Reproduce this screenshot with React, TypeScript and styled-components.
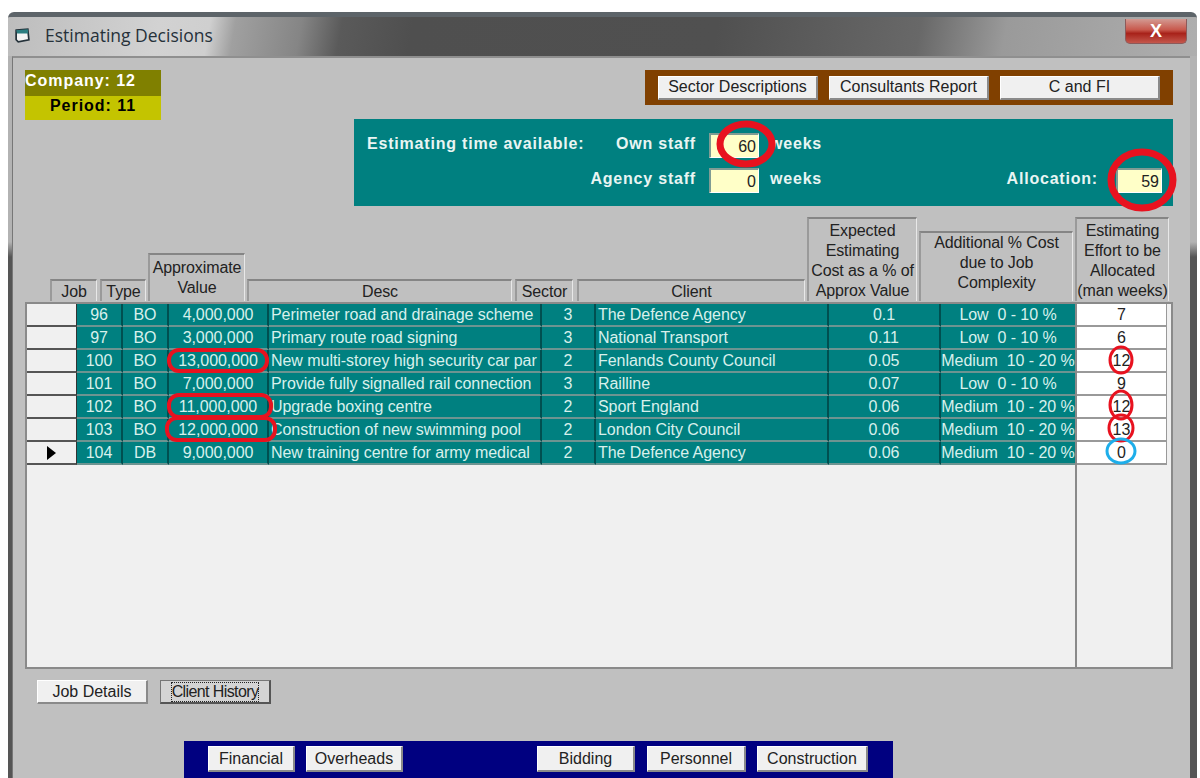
import React from "react";
import styled, { createGlobalStyle } from "styled-components";

const Global = createGlobalStyle`
  html, body { margin: 0; padding: 0; background: #fff; }
  body { font-family: "Liberation Sans", Arial, sans-serif; color: #111; }
`;

const Page = styled.div`
  position: relative;
  width: 1200px;
  height: 778px;
  overflow: hidden;
  background: #fff;
  box-sizing: border-box;
  padding: 12px 3px 0 8px;
`;

const Win = styled.div`
  height: 766px;
  display: flex;
  flex-direction: column;
  border-radius: 6px 6px 0 0;
  overflow: hidden;
  background: linear-gradient(180deg, #b3b3b3 0, #b3b3b3 225px, #555 240px, #555 100%);
  border-top: 5px solid #5d6469;
`;

const TitleBar = styled.div`
  height: 39px;
  box-sizing: border-box;
  flex: none;
  display: flex;
  align-items: center;
  gap: 14px;
  padding: 0 10px 3px 6px;
  background: linear-gradient(
    100deg,
    #bdbdbd 0,
    #d2d2d2 150px,
    #cfcfcf 200px,
    #a0a0a0 225px,
    #858585 290px,
    #5a5a5a 330px,
    #4f4f4f 400px,
    #505050 700px,
    #686868 900px,
    #9a9a9a 985px,
    #b0b0b0 1190px
  );
`;

const AppIcon = styled.svg`
  width: 17px;
  height: 17px;
  flex: none;
`;

const TitleText = styled.span`
  font-family: "Open Sans", "Liberation Sans", sans-serif;
  font-size: 17.5px;
  color: #26313a;
  flex: 1;
`;

const CloseButton = styled.div`
  width: 62px;
  height: 25px;
  margin-top: -7px;
  border: 1px solid #8c5a5a;
  border-top: none;
  border-radius: 0 0 5px 5px;
  box-sizing: border-box;
  background: linear-gradient(180deg, #d39a92 0, #c8584c 45%, #a8221a 60%, #c4574c 100%);
  color: #fff;
  font: bold 18px "Liberation Sans", sans-serif;
  display: flex;
  align-items: center;
  justify-content: center;
`;

const Client = styled.div`
  flex: 1;
  margin: 0 7px 0 4px;
  padding: 12px 17px 0 12px;
  background: #c0c0c0;
  border-top: 2px solid #8f8f8f;
  border-left: 1px solid #777;
`;

const TopArea = styled.div`
  display: flex;
  justify-content: space-between;
  align-items: flex-start;
`;

const StatusBox = styled.div`
  width: 136px;
  font-weight: bold;
  font-size: 16px;
  letter-spacing: 0.95px;
`;

const CompanyLine = styled.div`
  height: 26px;
  line-height: 21px;
  background: #808000;
  color: #fff;
`;

const PeriodLine = styled.div`
  height: 24px;
  line-height: 20px;
  padding-left: 25px;
  background: #c4c400;
  color: #000;
`;

const RightColumn = styled.div`
  width: 819px;
  display: flex;
  flex-direction: column;
  align-items: flex-end;
  gap: 14px;
`;

const ReportBar = styled.div`
  width: 528px;
  height: 35px;
  box-sizing: border-box;
  background: #804000;
  display: flex;
  align-items: center;
  gap: 11px;
  padding-left: 13px;
`;

const Btn = styled.div<{ $w: number; $h?: number; $focused?: boolean }>`
  width: ${(p) => p.$w}px;
  height: ${(p) => p.$h ?? 24}px;
  flex: none;
  box-sizing: border-box;
  background: ${(p) => (p.$focused ? "#d4d4d4" : "#f0f0f0")};
  border-style: solid;
  border-width: 1px 2px 2px 1px;
  border-color: ${(p) => (p.$focused ? "#777 #555 #555 #777" : "#fff #8a8a8a #8a8a8a #fff")};
  font-size: 16px;
  white-space: nowrap;
  display: flex;
  align-items: center;
  justify-content: center;
  color: #222;
`;

const FocusLabel = styled.span`
  outline: 1px dotted #222;
  outline-offset: 0;
  letter-spacing: -0.6px;
`;

const TimePanel = styled.div`
  width: 819px;
  height: 87px;
  background: #008080;
  color: #e9f5f3;
  font-weight: bold;
  font-size: 16px;
  letter-spacing: 0.8px;
  display: grid;
  grid-template-columns: 234px 108px 50px 66px 1fr 46px;
  grid-template-rows: 25px 25px;
  row-gap: 10px;
  align-items: center;
  padding: 14px 11px 0 13px;
  box-sizing: border-box;
`;

const PanelText = styled.span`
  padding-bottom: 4px;
  white-space: nowrap;
`;

const RightLabel = styled(PanelText)<{ $pad?: number; $wide?: boolean }>`
  text-align: right;
  padding-right: ${(p) => p.$pad ?? 13}px;
  ${(p) => p.$wide && "grid-column: 1 / 3;"}
`;

const Unit = styled(PanelText)`
  padding-left: 11px;
`;

const NumField = styled.div`
  height: 25px;
  box-sizing: border-box;
  background: #ffffc8;
  border-style: solid;
  border-width: 2px 1px 1px 2px;
  border-color: #7f9c94 #fff #fff #7f9c94;
  color: #222;
  font-weight: normal;
  letter-spacing: 0;
  text-align: right;
  line-height: 23px;
  padding-right: 2px;
`;

const HeaderRow = styled.div`
  display: flex;
  align-items: flex-end;
  gap: 2px;
  margin: 11px 0 1px 25px;
  height: 84px;
`;

const HeadCell = styled.div<{ $w: number; $h: number; $gap?: number; $pad: number }>`
  width: ${(p) => p.$w}px;
  height: ${(p) => p.$h}px;
  margin-left: ${(p) => p.$gap ?? 0}px;
  flex: none;
  box-sizing: border-box;
  padding-top: ${(p) => p.$pad}px;
  border-style: solid;
  border-width: 2px 1px 0 2px;
  border-color: #858585 #e8e8e8 #858585 #9a9a9a;
  font-size: 16px;
  line-height: 20px;
  letter-spacing: -0.1px;
  text-align: center;
  color: #222;
  white-space: pre-line;
  overflow: hidden;
`;

const Frame = styled.div`
  width: 1148px;
  height: 367px;
  box-sizing: border-box;
  background: #f0f0f0;
  border: 2px solid #8a8a8a;
  display: flex;
`;

const RowsColumn = styled.div`
  width: 1048px;
  flex: none;
`;

const Row = styled.div`
  height: 23px;
  box-sizing: border-box;
  display: grid;
  grid-template-columns: 50px 46px 46px 100px 273px 54px 233px 112px 134px;
`;

const Indicator = styled.div`
  background: #f0f0f0;
  border-right: 1px solid #333;
  border-bottom: 2px solid #555;
  display: flex;
  align-items: center;
  justify-content: center;
`;

const RowArrow = styled.span`
  width: 0;
  height: 0;
  border-style: solid;
  border-width: 7px 0 7px 9px;
  border-color: transparent transparent transparent #000;
`;

const DataCell = styled.div<{ $left?: boolean }>`
  background: #008080;
  border-right: 2px solid #004f50;
  border-bottom: 2px solid #6d9491;
  box-sizing: border-box;
  color: #d8f0ec;
  font-size: 16px;
  line-height: 21px;
  letter-spacing: -0.05px;
  text-align: ${(p) => (p.$left ? "left" : "center")};
  padding-left: ${(p) => (p.$left ? "2px" : 0)};
  white-space: pre;
  overflow: hidden;
  &:last-child { border-right: none; }
`;

const EffortColumn = styled.div`
  width: 92px;
  flex: none;
  border-left: 2px solid #8a8a8a;
`;

const EffortCell = styled.div`
  height: 23px;
  width: 90px;
  box-sizing: border-box;
  background: #fff;
  border-right: 1px solid #999;
  border-bottom: 2px solid #999;
  font-size: 16px;
  line-height: 21px;
  text-align: center;
  color: #222;
`;

const DetailButtons = styled.div`
  display: flex;
  gap: 12px;
  margin: 11px 0 0 12px;
`;

const NavBar = styled.div`
  width: 709px;
  height: 37px;
  margin: 37px 0 0 159px;
  box-sizing: border-box;
  background: #000080;
  display: flex;
  align-items: flex-start;
  padding: 5px 0 0 24px;
`;

const NavSpacer = styled.div<{ $w: number }>`
  width: ${(p) => p.$w}px;
  flex: none;
`;

const Notes = styled.svg`
  position: absolute;
  left: 0;
  top: 0;
  width: 1200px;
  height: 778px;
  pointer-events: none;
`;

type Job = [string, string, string, string, string, string, string, string, string];

const jobs: Job[] = [
  ["96", "BO", "4,000,000", "Perimeter road and drainage scheme", "3", "The Defence Agency", "0.1", "Low  0 - 10 %", "7"],
  ["97", "BO", "3,000,000", "Primary route road signing", "3", "National Transport", "0.11", "Low  0 - 10 %", "6"],
  ["100", "BO", "13,000,000", "New multi-storey high security car par", "2", "Fenlands County Council", "0.05", "Medium  10 - 20 %", "12"],
  ["101", "BO", "7,000,000", "Provide fully signalled rail connection", "3", "Railline", "0.07", "Low  0 - 10 %", "9"],
  ["102", "BO", "11,000,000", "Upgrade boxing centre", "2", "Sport England", "0.06", "Medium  10 - 20 %", "12"],
  ["103", "BO", "12,000,000", "Construction of new swimming pool", "2", "London City Council", "0.06", "Medium  10 - 20 %", "13"],
  ["104", "DB", "9,000,000", "New training centre for army medical", "2", "The Defence Agency", "0.06", "Medium  10 - 20 %", "0"],
];

const headers = [
  { label: "Job", w: 47, h: 22, pad: 1 },
  { label: "Type", w: 46, h: 22, gap: 1, pad: 1 },
  { label: "Approximate\nValue", w: 97, h: 48, pad: 3 },
  { label: "Desc", w: 265, h: 22, pad: 1 },
  { label: "Sector", w: 58, h: 22, gap: 1, pad: 1 },
  { label: "Client", w: 228, h: 22, gap: 2, pad: 1 },
  { label: "Expected\nEstimating\nCost as a % of\nApprox Value", w: 110, h: 84, pad: 2 },
  { label: "Additional % Cost\ndue to Job\nComplexity", w: 154, h: 70, pad: 0 },
  { label: "Estimating\nEffort to be\nAllocated\n(man weeks)", w: 94, h: 84, pad: 2 },
];

export default function App() {
  return (
    <Page>
      <Global />
      <Win>
        <TitleBar>
          <AppIcon viewBox="0 0 16 16">
            <path d="M2 3 L13 2 L14 12 L4 14 L2 12 Z" fill="#f4f4f4" stroke="#25323a" strokeWidth="1.6" />
            <path d="M2 3 L13 2 L13.4 6 L3 6 Z" fill="#2b7d80" />
          </AppIcon>
          <TitleText>Estimating Decisions</TitleText>
          <CloseButton>X</CloseButton>
        </TitleBar>
        <Client>
          <TopArea>
            <StatusBox>
              <CompanyLine>Company: 12</CompanyLine>
              <PeriodLine>Period: 11</PeriodLine>
            </StatusBox>
            <RightColumn>
              <ReportBar>
                <Btn $w={160}>Sector Descriptions</Btn>
                <Btn $w={160}>Consultants Report</Btn>
                <Btn $w={160}>C and FI</Btn>
              </ReportBar>
              <TimePanel>
                <PanelText>Estimating time available:</PanelText>
                <RightLabel>Own staff</RightLabel>
                <NumField>60</NumField>
                <Unit>weeks</Unit>
                <span />
                <span />
                <RightLabel $wide>Agency staff</RightLabel>
                <NumField>0</NumField>
                <Unit>weeks</Unit>
                <RightLabel $pad={18}>Allocation:</RightLabel>
                <NumField>59</NumField>
              </TimePanel>
            </RightColumn>
          </TopArea>
          <HeaderRow>
            {headers.map((h) => (
              <HeadCell key={h.label} $w={h.w} $h={h.h} $gap={h.gap} $pad={h.pad}>{h.label}</HeadCell>
            ))}
          </HeaderRow>
          <Frame>
            <RowsColumn>
              {jobs.map((job, i) => (
                <Row key={job[0]}>
                  <Indicator>{i === jobs.length - 1 && <RowArrow />}</Indicator>
                  {job.slice(0, 8).map((v, c) => (
                    <DataCell key={c} $left={c === 3 || c === 5}>{v}</DataCell>
                  ))}
                </Row>
              ))}
            </RowsColumn>
            <EffortColumn>
              {jobs.map((job) => (
                <EffortCell key={job[0]}>{job[8]}</EffortCell>
              ))}
            </EffortColumn>
          </Frame>
          <DetailButtons>
            <Btn $w={111}>Job Details</Btn>
            <Btn $w={111} $focused>
              <FocusLabel>Client History</FocusLabel>
            </Btn>
          </DetailButtons>
          <NavBar>
            <Btn $w={87} $h={26}>Financial</Btn>
            <NavSpacer $w={11} />
            <Btn $w={97} $h={26}>Overheads</Btn>
            <NavSpacer $w={134} />
            <Btn $w={98} $h={26}>Bidding</Btn>
            <NavSpacer $w={12} />
            <Btn $w={99} $h={26}>Personnel</Btn>
            <NavSpacer $w={11} />
            <Btn $w={111} $h={26}>Construction</Btn>
          </NavBar>
        </Client>
      </Win>
      {/* Hand-drawn markers placed over figures on the form */}
      <Notes viewBox="0 0 1200 778" fill="none">
        <g stroke="#e8121f">
          <ellipse cx="746" cy="144" rx="26" ry="20" strokeWidth="7" />
          <ellipse cx="1142" cy="180" rx="31" ry="28" strokeWidth="7" />
          <rect x="169" y="350" width="98" height="21" rx="10" strokeWidth="4" />
          <rect x="169" y="395" width="102" height="22" rx="10" strokeWidth="4" />
          <rect x="167" y="418" width="108" height="22" rx="10" strokeWidth="4" />
          <ellipse cx="1121" cy="360" rx="11" ry="13" strokeWidth="3" />
          <ellipse cx="1121" cy="405" rx="11" ry="14" strokeWidth="3" />
          <ellipse cx="1121" cy="428" rx="12" ry="13" strokeWidth="3" />
        </g>
        <ellipse cx="1121" cy="451" rx="14" ry="12" stroke="#1eaeea" strokeWidth="3" />
      </Notes>
    </Page>
  );
}
